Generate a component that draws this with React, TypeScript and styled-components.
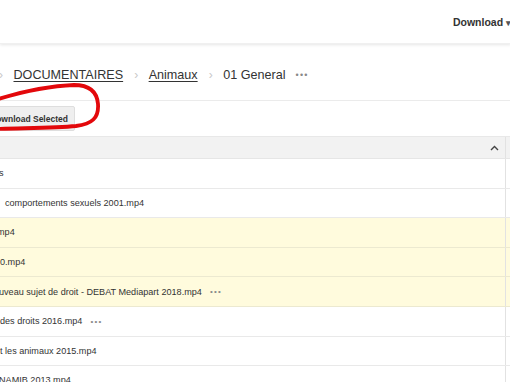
import React from "react";
import styled, { createGlobalStyle } from "styled-components";

type FileRow = {
  name: string;
  indent: number;
  selected?: boolean;
  more?: boolean;
};

const files: FileRow[] = [
  { name: "s", indent: -1 },
  { name: "comportements sexuels 2001.mp4", indent: 5 },
  { name: "mp4", indent: -3, selected: true },
  { name: "0.mp4", indent: 0, selected: true },
  { name: "uveau sujet de droit - DEBAT Mediapart 2018.mp4", indent: -1, selected: true, more: true },
  { name: "des droits 2016.mp4", indent: 0, more: true },
  { name: "t les animaux 2015.mp4", indent: 0 },
  { name: "NAMIB 2013.mp4", indent: -1 },
];

const App = (): JSX.Element => {
  return (
    <>
      <GlobalStyle />
      <Page>
        <TopBar>
          <MenuLink>
            Download <Caret>▾</Caret>
          </MenuLink>
        </TopBar>

        <Crumbs>
          <Sep>›</Sep>
          <CrumbLink>DOCUMENTAIRES</CrumbLink>
          <Sep>›</Sep>
          <CrumbLink>Animaux</CrumbLink>
          <Sep>›</Sep>
          <CrumbCurrent>01 General</CrumbCurrent>
          <Dots>•••</Dots>
        </Crumbs>

        <Toolbar>
          <GrayButton>Download Selected</GrayButton>
        </Toolbar>

        <Table>
          <HeadRow>
            <HeadCell>
              <svg width="9" height="6" viewBox="0 0 9 6">
                <path d="M1 5 L4.5 1.5 L8 5" fill="none" stroke="#444" strokeWidth="1.4" />
              </svg>
            </HeadCell>
            <Edge />
          </HeadRow>
          {files.map((f, i) => (
            <Row key={i} selected={f.selected}>
              <NameCell style={{ textIndent: f.indent }}>
                {f.name}
                {f.more && <RowDots>•••</RowDots>}
              </NameCell>
              <Edge />
            </Row>
          ))}
        </Table>

        {/* hand drawn mark round the button */}
        <Scribble width="112" height="140" viewBox="0 0 112 140">
          <path
            d="M-2 99 C18 93 45 86 74 85 C90 85 97 92 98 104 C99 118 92 124 76 126 C55 128 25 128 -2 129"
            fill="none"
            stroke="#e3080b"
            strokeWidth="3.8"
            strokeLinecap="round"
          />
        </Scribble>
      </Page>
    </>
  );
};

export default App;

const GlobalStyle = createGlobalStyle`
  html, body {
    margin: 0;
    padding: 0;
    background: #ffffff;
    overflow: hidden;
  }
  body {
    font-family: "Liberation Sans", Arial, sans-serif;
    color: #333333;
  }
`;

const Page = styled.div`
  position: relative;
  width: 510px;
  height: 382px;
  overflow: hidden;
  background: #ffffff;
`;

const TopBar = styled.div`
  height: 44px;
  display: flex;
  align-items: center;
  justify-content: flex-end;
  margin-right: -1px;
  box-shadow: 0 1px 3px rgba(0, 0, 0, 0.1);
  border-bottom: 1px solid #f0f0f0;
  box-sizing: border-box;
`;

const MenuLink = styled.span`
  font-size: 10.5px;
  font-weight: bold;
  color: #333333;
  white-space: nowrap;
`;

const Caret = styled.span`
  font-size: 9px;
  color: #555555;
`;

const Crumbs = styled.div`
  height: 57px;
  display: flex;
  align-items: center;
  padding-top: 6px;
  box-sizing: border-box;
  border-bottom: 1px solid #ebebeb;
  font-size: 12.6px;
`;

const Sep = styled.span`
  color: #c8c8c8;
  font-size: 12px;
  margin: 0 10.5px 0 11px;

  &:first-child {
    margin-left: -1px;
  }
`;

const CrumbLink = styled.span`
  color: #333333;
  text-decoration: underline;
  text-underline-offset: 2px;
`;

const CrumbCurrent = styled.span`
  color: #333333;
`;

const Dots = styled.span`
  color: #888888;
  font-size: 9px;
  letter-spacing: 1.3px;
  margin-left: 10px;
`;

const Toolbar = styled.div`
  display: flex;
  align-items: center;
  padding: 5px 0 5px;
`;

const GrayButton = styled.button`
  height: 25px;
  margin-left: -19px;
  padding: 0 6px 0 8px;
  border: 1px solid #dedede;
  border-radius: 2px;
  background: #efefef;
  font-family: "Liberation Sans", Arial, sans-serif;
  font-size: 8.5px;
  font-weight: bold;
  color: #333333;
  white-space: nowrap;
`;

const Table = styled.div`
  display: flex;
  flex-direction: column;
`;

const HeadRow = styled.div`
  height: 23px;
  display: flex;
  background: #f2f2f2;
  border-top: 1px solid #e8e8e8;
  border-bottom: 1px solid #e6e6e6;
  box-sizing: border-box;
`;

const HeadCell = styled.div`
  flex: 1;
  display: flex;
  align-items: center;
  justify-content: flex-end;
  padding-right: 6px;
`;

const Edge = styled.div`
  width: 4px;
  border-left: 1px solid #e2e2e2;
`;

const Row = styled.div<{ selected?: boolean }>`
  height: 29.6px;
  display: flex;
  background: ${(p) => (p.selected ? "#fffbdd" : "#ffffff")};
  border-bottom: 1px solid ${(p) => (p.selected ? "#ece9d0" : "#e9e9e9")};
  box-sizing: border-box;
`;

const NameCell = styled.div`
  flex: 1;
  display: flex;
  align-items: center;
  font-size: 9.1px;
  color: #333333;
  white-space: nowrap;
  overflow: hidden;
`;

const RowDots = styled.span`
  color: #8a8a8a;
  font-size: 8px;
  letter-spacing: 1.3px;
  margin-left: 8px;
  text-indent: 0;
`;

const Scribble = styled.svg`
  position: absolute;
  left: 0;
  top: 0;
  pointer-events: none;
`;
